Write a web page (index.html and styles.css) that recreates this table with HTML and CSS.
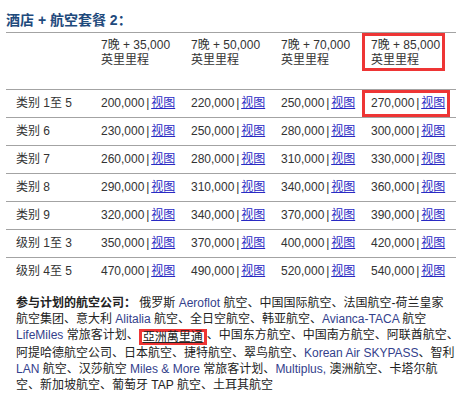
FILE: index.html
```html
<!DOCTYPE html>
<html lang="zh-CN">
<head>
<meta charset="utf-8">
<title>酒店 + 航空套餐 2</title>
<link rel="stylesheet" href="styles.css">
</head>
<body>
<h2 class="title">酒店 + 航空套餐 2：</h2>
<div class="table">
  <div class="row head">
    <div class="cell label"></div>
    <div class="cell">7晚 + 35,000<br>英里里程</div>
    <div class="cell">7晚 + 50,000<br>英里里程</div>
    <div class="cell">7晚 + 70,000<br>英里里程</div>
    <div class="cell hl"><div class="box">7晚 + 85,000<br>英里里程</div></div>
  </div>
  <div class="row">
    <div class="cell label">类别 1至 5</div>
    <div class="cell">200,000 | <a href="#">视图</a></div>
    <div class="cell">220,000 | <a href="#">视图</a></div>
    <div class="cell">250,000 | <a href="#">视图</a></div>
    <div class="cell hl"><div class="box">270,000 | <a href="#">视图</a></div></div>
  </div>
  <div class="row">
    <div class="cell label">类别 6</div>
    <div class="cell">230,000 | <a href="#">视图</a></div>
    <div class="cell">250,000 | <a href="#">视图</a></div>
    <div class="cell">280,000 | <a href="#">视图</a></div>
    <div class="cell">300,000 | <a href="#">视图</a></div>
  </div>
  <div class="row">
    <div class="cell label">类别 7</div>
    <div class="cell">260,000 | <a href="#">视图</a></div>
    <div class="cell">280,000 | <a href="#">视图</a></div>
    <div class="cell">310,000 | <a href="#">视图</a></div>
    <div class="cell">330,000 | <a href="#">视图</a></div>
  </div>
  <div class="row">
    <div class="cell label">类别 8</div>
    <div class="cell">290,000 | <a href="#">视图</a></div>
    <div class="cell">310,000 | <a href="#">视图</a></div>
    <div class="cell">340,000 | <a href="#">视图</a></div>
    <div class="cell">360,000 | <a href="#">视图</a></div>
  </div>
  <div class="row">
    <div class="cell label">类别 9</div>
    <div class="cell">320,000 | <a href="#">视图</a></div>
    <div class="cell">340,000 | <a href="#">视图</a></div>
    <div class="cell">370,000 | <a href="#">视图</a></div>
    <div class="cell">390,000 | <a href="#">视图</a></div>
  </div>
  <div class="row">
    <div class="cell label">级别 1至 3</div>
    <div class="cell">350,000 | <a href="#">视图</a></div>
    <div class="cell">370,000 | <a href="#">视图</a></div>
    <div class="cell">400,000 | <a href="#">视图</a></div>
    <div class="cell">420,000 | <a href="#">视图</a></div>
  </div>
  <div class="row">
    <div class="cell label">级别 4至 5</div>
    <div class="cell">470,000 | <a href="#">视图</a></div>
    <div class="cell">490,000 | <a href="#">视图</a></div>
    <div class="cell">520,000 | <a href="#">视图</a></div>
    <div class="cell">540,000 | <a href="#">视图</a></div>
  </div>
</div>
<p class="partners"><b>参与计划的航空公司：</b> 俄罗斯 <span class="en">Aeroflot</span> 航空、中国国际航空、法国航空-荷兰皇家<br>航空集团、意大利 <span class="en">Alitalia</span> 航空、全日空航空、韩亚航空、<span class="en">Avianca-TACA</span> 航空<br><span class="en">LifeMiles</span> 常旅客计划、<a class="mark" href="#">亞洲萬里通</a>、中国东方航空、中国南方航空、阿联酋航空、<br>阿提哈德航空公司、日本航空、捷特航空、翠鸟航空、<span class="en">Korean Air SKYPASS</span>、智利<br><span class="en">LAN</span> 航空、汉莎航空 <span class="en">Miles &amp; More</span> 常旅客计划、<span class="en">Multiplus,</span> 澳洲航空、卡塔尔航<br>空、新加坡航空、葡萄牙 TAP 航空、土耳其航空</p>
</body>
</html>
```

FILE: styles.css
```css
html, body {
  margin: 0;
  background: #fff;
}
body {
  padding: 0 8px 0 6px;
  font-family: "Liberation Sans", "Noto Sans CJK SC", sans-serif;
  font-size: 12px;
  color: #333;
}
.title {
  margin: 0;
  padding: 11px 0 3px;
  height: 18px;
  line-height: 18px;
  font-size: 14px;
  font-weight: bold;
  color: #1e4a7c;
  font-family: "Liberation Sans", "Noto Sans CJK SC", sans-serif;
}
.row {
  display: grid;
  grid-template-columns: 85px 90px 90px 90px 1fr;
  border-top: 1px solid #a3a3a3;
  height: 27px;
}
.row.head {
  height: 56px;
}
.cell {
  padding-left: 10px;
  line-height: 27px;
  white-space: nowrap;
  word-spacing: -1.5px;
}
.cell.label {
  word-spacing: 0;
}
.head .cell {
  padding-top: 5px;
  line-height: 15px;
  word-spacing: 0;
}
.cell.hl {
  padding-left: 1px;
}
.head .cell.hl {
  padding-top: 0;
}
.box {
  box-sizing: border-box;
  border: 3px solid #ee3535;
  padding-left: 6px;
  width: 88px;
  height: 27px;
  line-height: 21px;
}
.head .box {
  width: 83px;
  height: auto;
  padding-top: 2px;
  line-height: 15px;
}
a {
  color: #2a2ac4;
  text-decoration: underline;
}
.partners {
  margin: 10px 0 0;
  padding-left: 10px;
  line-height: 16px;
  color: #222;
  white-space: nowrap;
}
.partners b {
  color: #222;
}
.en {
  color: #33418c;
}
.mark {
  display: inline-block;
  color: #222;
  border: 3px solid #ee3535;
  line-height: 10px;
  padding: 0 1px;
  vertical-align: -2px;
}
```
